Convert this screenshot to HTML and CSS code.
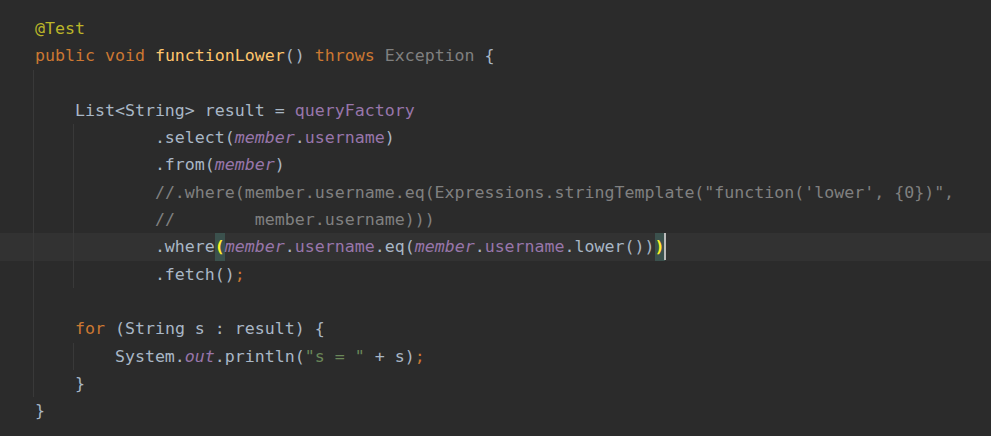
FILE: index.html
```html
<!DOCTYPE html>
<html>
<head>
<meta charset="utf-8">
<link rel="stylesheet" href="styles.css">
</head>
<body>
<div class="editor">
<div class="ln"><span class="ann">@Test</span></div>
<div class="ln"><span class="kw">public void </span><span class="fn">functionLower</span>() <span class="kw">throws </span><span class="cls">Exception</span> {</div>
<div class="ln g1"> </div>
<div class="ln g1">    List&lt;String&gt; result = <span class="fld">queryFactory</span></div>
<div class="ln g2">            .select(<span class="st">member</span>.<span class="fld">username</span>)</div>
<div class="ln g2">            .from(<span class="st">member</span>)</div>
<div class="ln g2">            <span class="cm">//.where(member.username.eq(Expressions.stringTemplate("function('lower', {0})",</span></div>
<div class="ln g2">            <span class="cm">//        member.username)))</span></div>
<div class="ln g2 cur">            .where<span class="br">(</span><span class="st">member</span>.<span class="fld">username</span>.eq(<span class="st">member</span>.<span class="fld">username</span>.lower())<span class="br">)</span><span class="caret"></span></div>
<div class="ln g2">            .fetch()<span class="kw">;</span></div>
<div class="ln g1"> </div>
<div class="ln g1">    <span class="kw">for </span>(String s : result) {</div>
<div class="ln g2">        System.<span class="st">out</span>.println(<span class="str">"s = "</span> + s)<span class="kw">;</span></div>
<div class="ln g1">    }</div>
<div class="ln">}</div>
</div>
</body>
</html>
```
FILE: styles.css
```css
html, body {
  margin: 0;
  padding: 0;
  background: #2b2b2b;
}
.editor {
  padding-top: 15px;
  font-family: "DejaVu Sans Mono", "Liberation Mono", monospace;
  font-size: 16.6px;
  color: #a9b7c6;
  height: 436px;
  box-sizing: border-box;
  overflow: hidden;
}
.ln {
  height: 27.3px;
  line-height: 27.3px;
  padding-left: 35px;
  white-space: pre;
}
.g1 {
  background-image: linear-gradient(#393939, #393939);
  background-size: 1px 100%;
  background-position: 33px 0;
  background-repeat: no-repeat;
}
.g2 {
  background-image: linear-gradient(#393939, #393939), linear-gradient(#393939, #393939);
  background-size: 1px 100%, 1px 100%;
  background-position: 33px 0, 73px 0;
  background-repeat: no-repeat;
}
.cur {
  background-color: #323232;
}
.ann { color: #bbb529; }
.kw { color: #cc7832; }
.fn { color: #ffc66d; }
.cls { color: #808080; }
.fld { color: #9876aa; }
.st { color: #9876aa; font-style: italic; }
.cm { color: #808080; }
.str { color: #6a8759; }
.br {
  display: inline-block;
  background: #3b514d;
  color: #ffef28;
  font-weight: bold;
  height: 27.3px;
  vertical-align: top;
}
.caret {
  display: inline-block;
  width: 2px;
  height: 27px;
  margin-left: -1px;
  background: #bbbbbb;
  vertical-align: top;
}
```
